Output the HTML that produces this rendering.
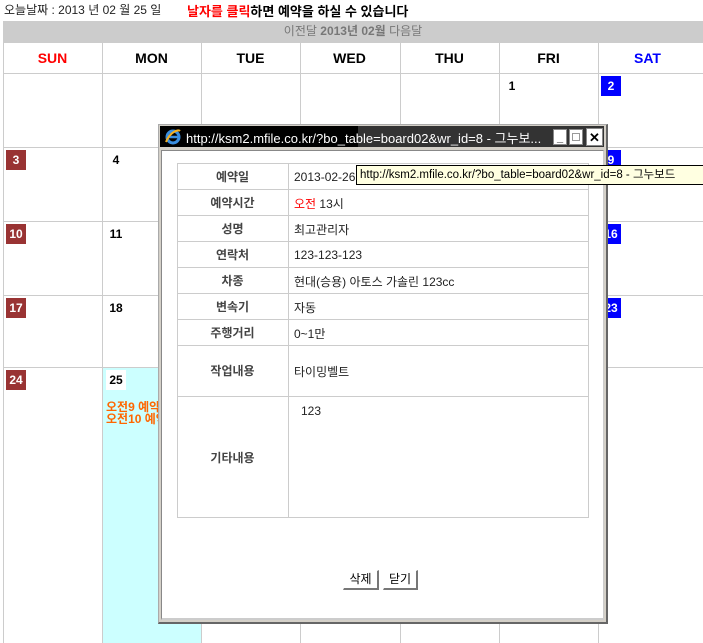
<!DOCTYPE html>
<html><head><meta charset="utf-8">
<style>
*{margin:0;padding:0;box-sizing:border-box}
body{width:703px;height:643px;overflow:hidden;background:#fff;font-family:"Liberation Sans","Noto Sans CJK KR","NanumGothic",sans-serif;position:relative;font-size:12px;color:#000}
.a{position:absolute}
.vl{position:absolute;top:42px;width:1px;height:601px;background:#ccc}
.hl{position:absolute;left:3px;width:700px;height:1px;background:#ccc}
.dh{position:absolute;top:50px;width:99px;text-align:center;font-weight:bold;font-size:14px}
.d{position:absolute;font-weight:bold;font-size:12px;width:20px;height:20px;line-height:20px;text-align:center;color:#000}
.br{background:#993333;color:#fff}
.bl{background:#0000ff;color:#fff}
.row{position:absolute;left:177px;width:412px;border-top:1px solid #ccc}
.lab{position:absolute;left:0;width:111px;text-align:center;color:#444;font-weight:bold;font-size:12px}
.val{position:absolute;left:117px;font-size:12px;color:#222}
.btn{position:absolute;top:570px;height:20px;border:1px solid #fff;border-right:2px solid #777;border-bottom:2px solid #777;background:#fff;font-size:12px;line-height:17px;text-align:center}
</style></head><body>
<div class="a" style="left:4px;top:1px;font-size:12px;color:#222">오늘날짜 : 2013 년 02 월 25 일</div>
<div class="a" style="left:187px;top:1px;font-size:13px;font-weight:bold"><span style="color:#f00">날자를 클릭</span>하면 예약을 하실 수 있습니다</div>
<div class="a" style="left:3px;top:21px;width:700px;height:21px;background:#ccc;text-align:center;line-height:21px;color:#777;font-size:12px">이전달 <b>2013년 02월</b> 다음달</div>
<div class="a" style="left:102px;top:367px;width:99px;height:276px;background:#ccffff"></div>
<div class="vl" style="left:3px"></div><div class="vl" style="left:102px"></div><div class="vl" style="left:201px"></div><div class="vl" style="left:300px"></div><div class="vl" style="left:400px"></div><div class="vl" style="left:499px"></div><div class="vl" style="left:598px"></div>
<div class="hl" style="top:42px"></div><div class="hl" style="top:73px"></div><div class="hl" style="top:147px"></div><div class="hl" style="top:221px"></div><div class="hl" style="top:295px"></div><div class="hl" style="top:367px"></div>
<div class="dh" style="left:3px;color:#f00">SUN</div><div class="dh" style="left:102px">MON</div><div class="dh" style="left:201px">TUE</div><div class="dh" style="left:300px">WED</div><div class="dh" style="left:400px">THU</div><div class="dh" style="left:499px">FRI</div><div class="dh" style="left:598px;color:#00f">SAT</div>
<div class="d" style="left:502px;top:76px">1</div>
<div class="d bl" style="left:601px;top:76px">2</div>
<div class="d br" style="left:6px;top:150px">3</div><div class="d" style="left:106px;top:150px">4</div><div class="d bl" style="left:601px;top:150px">9</div>
<div class="d br" style="left:6px;top:224px">10</div><div class="d" style="left:106px;top:224px">11</div><div class="d bl" style="left:601px;top:224px">16</div>
<div class="d br" style="left:6px;top:298px">17</div><div class="d" style="left:106px;top:298px">18</div><div class="d bl" style="left:601px;top:298px">23</div>
<div class="d br" style="left:6px;top:370px">24</div><div class="d" style="left:106px;top:370px;background:#fff">25</div>
<div class="a" style="left:106px;top:401px;font-size:12px;font-weight:bold;color:#ff6600;line-height:12px;width:55px;overflow:hidden;white-space:nowrap">오전9 예약<br>오전10 예약</div>

<!-- popup -->
<div class="a" style="left:158px;top:124px;width:450px;height:500px;background:#d4d0c8;border:1px solid #aaa;border-right:2px solid #666;border-bottom:2px solid #666"></div>
<div class="a" style="left:160px;top:126px;width:444px;height:21px;background:#333"></div>
<div class="a" style="left:160px;top:126px;width:198px;height:21px;background:#000"></div>
<svg class="a" style="left:164px;top:128px" width="18" height="18" viewBox="0 0 18 18"><ellipse cx="9" cy="9" rx="6" ry="6" fill="none" stroke="#3a8ee0" stroke-width="3"/><path d="M4 9h10" stroke="#3a8ee0" stroke-width="2.5"/><path d="M2 14C6 4 14 1 16 3" fill="none" stroke="#f5b021" stroke-width="2"/></svg>
<div class="a" style="left:186px;top:128px;font-size:13px;color:#fff;white-space:nowrap">http://ksm2.mfile.co.kr/?bo_table=board02&amp;wr_id=8 - 그누보...</div>
<div class="a" style="left:553px;top:129px;width:14px;height:16px;background:#fff;border:1px solid #888;font-size:11px;font-weight:bold;text-align:center;line-height:16px">_</div>
<div class="a" style="left:569px;top:129px;width:14px;height:16px;background:#fff;border:1px solid #888"><div style="margin:3px 2px;width:8px;height:8px;border:1px solid #999"></div></div>
<div class="a" style="left:586px;top:128px;width:17px;height:18px;background:#fff;border:1px solid #888;font-weight:bold;text-align:center;line-height:17px;font-size:13px">✕</div>
<div class="a" style="left:161px;top:150px;width:443px;height:470px;background:#fff;border:1px solid #888;border-right:1px solid #ccc;border-bottom:2px solid #ccc"></div>
<div class="a" style="left:177px;top:163px;width:412px;height:355px;border:1px solid #ccc"></div>
<div class="a" style="left:288px;top:163px;width:1px;height:355px;background:#ccc"></div>
<div class="row" style="top:163px"><div class="lab" style="top:4px">예약일</div><div class="val" style="top:6px">2013-02-26</div></div>
<div class="row" style="top:189px"><div class="lab" style="top:4px">예약시간</div><div class="val" style="top:5px"><span style="color:#f00">오전</span> 13시</div></div>
<div class="row" style="top:215px"><div class="lab" style="top:4px">성명</div><div class="val" style="top:5px">최고관리자</div></div>
<div class="row" style="top:241px"><div class="lab" style="top:4px">연락처</div><div class="val" style="top:6px">123-123-123</div></div>
<div class="row" style="top:267px"><div class="lab" style="top:4px">차종</div><div class="val" style="top:5px">현대(승용) 아토스 가솔린 123cc</div></div>
<div class="row" style="top:293px"><div class="lab" style="top:4px">변속기</div><div class="val" style="top:5px">자동</div></div>
<div class="row" style="top:319px"><div class="lab" style="top:4px">주행거리</div><div class="val" style="top:5px">0~1만</div></div>
<div class="row" style="top:345px"><div class="lab" style="top:16px">작업내용</div><div class="val" style="top:17px">타이밍벨트</div></div>
<div class="row" style="top:396px"><div class="lab" style="top:52px">기타내용</div><div class="val" style="left:124px;top:7px">123</div></div>
<div class="btn" style="left:343px;width:36px">삭제</div>
<div class="btn" style="left:383px;width:35px">닫기</div>
<div class="a" style="left:356px;top:165px;width:360px;height:20px;background:#ffffe1;border:1px solid #000;font-size:11.5px;line-height:18px;padding-left:3px;white-space:nowrap;color:#000">http://ksm2.mfile.co.kr/?bo_table=board02&amp;wr_id=8 - 그누보드</div>
</body></html>
